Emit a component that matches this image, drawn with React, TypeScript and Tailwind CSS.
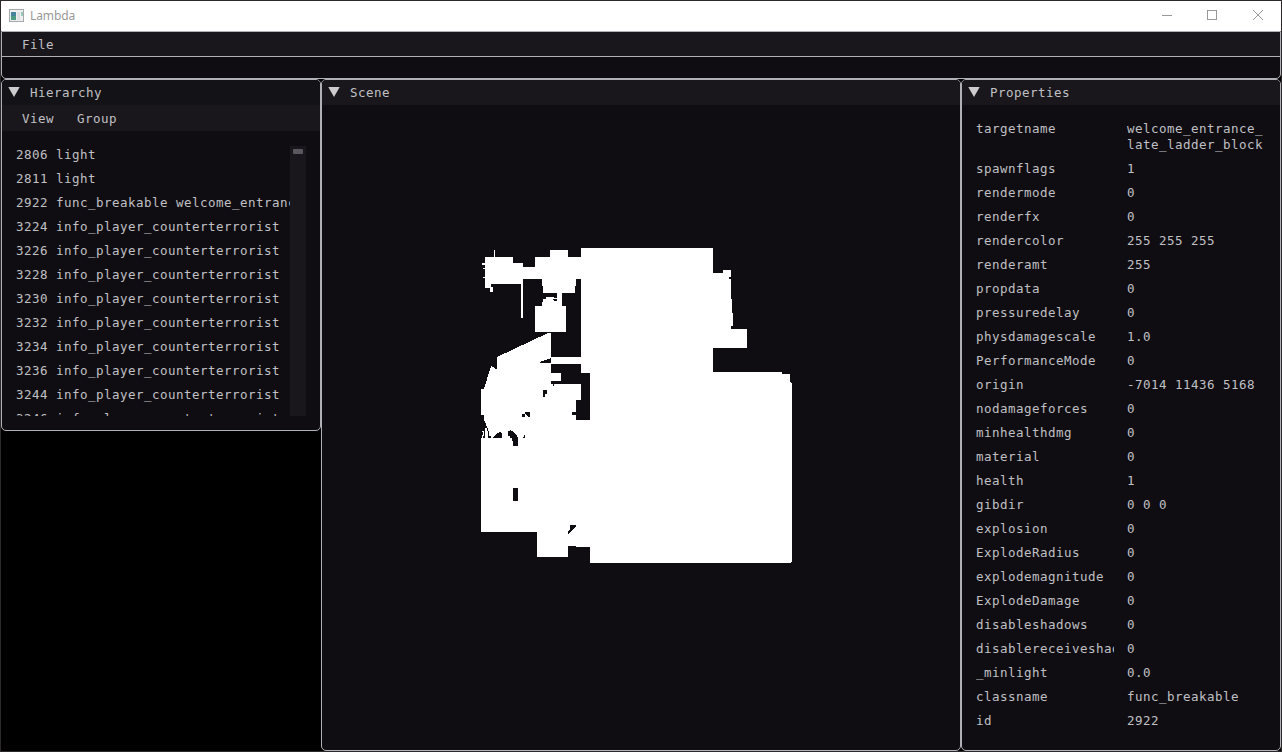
import type { ReactNode } from "react";

const entities = [
  "2806 light",
  "2811 light",
  "2922 func_breakable welcome_entrance_late_ladder_block",
  "3224 info_player_counterterrorist",
  "3226 info_player_counterterrorist",
  "3228 info_player_counterterrorist",
  "3230 info_player_counterterrorist",
  "3232 info_player_counterterrorist",
  "3234 info_player_counterterrorist",
  "3236 info_player_counterterrorist",
  "3244 info_player_counterterrorist",
  "3246 info_player_counterterrorist",
];

const properties: [string, string][] = [
  ["targetname", "welcome_entrance_\nlate_ladder_block"],
  ["spawnflags", "1"],
  ["rendermode", "0"],
  ["renderfx", "0"],
  ["rendercolor", "255 255 255"],
  ["renderamt", "255"],
  ["propdata", "0"],
  ["pressuredelay", "0"],
  ["physdamagescale", "1.0"],
  ["PerformanceMode", "0"],
  ["origin", "-7014 11436 5168"],
  ["nodamageforces", "0"],
  ["minhealthdmg", "0"],
  ["material", "0"],
  ["health", "1"],
  ["gibdir", "0 0 0"],
  ["explosion", "0"],
  ["ExplodeRadius", "0"],
  ["explodemagnitude", "0"],
  ["ExplodeDamage", "0"],
  ["disableshadows", "0"],
  ["disablereceiveshadows", "0"],
  ["_minlight", "0.0"],
  ["classname", "func_breakable"],
  ["id", "2922"],
];

function AppIcon() {
  return (
    <svg className="mb-px ml-2 h-[14px] w-4" viewBox="0 0 16 14" shapeRendering="crispEdges">
      <rect x="0.5" y="0.5" width="14" height="12" fill="#eef0f0" stroke="#a4a9ad" />
      <rect x="2" y="3" width="5" height="8" fill="#46839c" />
      <rect x="2" y="7" width="5" height="4" fill="#4c9b82" />
      <rect x="8" y="3" width="3" height="8" fill="#dedfe0" />
      <rect x="12" y="3" width="2" height="4" fill="#9cc8b8" />
    </svg>
  );
}

function TitleBar() {
  return (
    <header className="flex h-[30px] shrink-0 items-center bg-white">
      <AppIcon />
      <span className="ml-[5px] font-['Noto_Sans',sans-serif] text-[12px] leading-4 tracking-[-0.1px] text-[#999]">Lambda</span>
      <svg className="mb-[2px] ml-auto mr-4 h-[12px] w-[104px]" viewBox="0 0 104 12" fill="none" stroke="#999">
        <path d="M1 6.5h10M46.5 1.5h9v9h-9z" shapeRendering="crispEdges" />
        <path d="M92 1l10 10M102 1L92 11" />
      </svg>
    </header>
  );
}

function Panel({ title, active, className, children }: { title: string; active?: boolean; className: string; children: ReactNode }) {
  return (
    <section className={`flex flex-col overflow-hidden rounded-[5px] border border-[#b0b1b7] bg-[#0f0d12] ${className}`}>
      <div className={`flex h-[25px] shrink-0 items-center pl-1.5 ${active ? "bg-[#121217]" : "bg-[#1a171c]"}`}>
        <svg className="mb-px h-[10px] w-[12px]" viewBox="0 0 12 10">
          <path d="M0.3 0h11.4L6 10z" fill="#cccccf" />
        </svg>
        <h2 className="ml-2.5 pt-px">{title}</h2>
      </div>
      {children}
    </section>
  );
}

function MapView() {
  return (
    <svg className="ml-[148px] mt-[135px] h-[340px] w-[340px]" viewBox="470 240 340 340" shapeRendering="crispEdges">
      <path
        fill="#fff"
        d="M581 248H713V273H723V270H731V299H732V313H733V326H731V329H747V348H713V372H782V374H790V382H791V383H792V562H791V563H590V547H576V546H568V557H537V532H481V389H484L491 366L495 368V369H497V357L548 333H551V357H581V279H576V286H575V293H562V306H566V332H535V306H542V302H543V299H546V297H554V298H557V293H543V286H542V279H523V318H521V284H491V287H493V292H490V288H485V257H494V250H495V257H513V263H523V267H535V257H550V250H568V257H581Z"
      />
      <path fill="#fff" d="M482 263h3v2h-3zM483 268h2v1h-2zM483 277h2v1h-2zM557 293h5v14h-5z" />
      <path
        fill="#0f0d12"
        d="M551 364H581V373H590V420H576V400H581V384H554V386H553V384H551V381H561V373H551ZM540 362L551 358V363H540ZM729 277h2v2h-2zM731 277h3v2h-3zM553 299h4v2h-3v-1h-1zM543 390h4v4h-2v3h-2zM525 412h5v5h-2l-3-4zM522 414h3v3h-3zM572 412h4v3h-4zM513 488h5v13h-5zM570 525h6v2l-8 7v-3l2-2z"
      />
      <path
        fill="#0f0d12"
        d="M481 415h3v6h1v2h1v3h1v2h1v3h1v5h2v2h-3v-7h-1v-3h-2v2h-1v1h-2v7h-1zM482 432h1v3h-1zM483 436h2v2h-2zM484 430h1v8h-1zM493 438v-1l5-4h1v-1h2v1h1v5zM508 431h2v-1h1v1h2v1h1v1h1v1h1v1h1v2h1v9h-5v-5h-1v-3h-2v-2h-2zM524 435h1v3h-2v-1h1z"
      />
    </svg>
  );
}

export default function App() {
  return (
    <div className="flex h-[752px] w-[1282px] flex-col overflow-hidden border border-[#2d292b] bg-black font-['DejaVu_Sans_Mono',monospace] text-[12.5px] leading-4 tracking-[0.475px] text-[#c0c0c4]">
      <TitleBar />
      <div className="h-12 shrink-0 overflow-hidden rounded-b-[5px] border border-[#b0b1b7] bg-[#0f0d12]">
        <nav className="flex h-[25px] items-center border-b border-[#b0b1b7] bg-[#1a171c] pl-[20px] pt-[2px]">File</nav>
      </div>
      <main className="flex h-[672px] shrink-0 items-start">
        <Panel title="Hierarchy" active className="h-[352px] w-[320px]">
          <nav className="flex h-[26px] shrink-0 items-center gap-[23px] bg-[#1a171c] pl-[20px] pt-[2px]">
            <span>View</span>
            <span>Group</span>
          </nav>
          <div className="ml-[13px] mt-[15px] flex h-[270px] w-[291px] overflow-hidden">
            <ul className="w-[275px] overflow-hidden pl-px pt-px">
              {entities.map((name) => (
                <li key={name} className="mb-2 whitespace-pre">{name}</li>
              ))}
            </ul>
            <div className="w-4 bg-[#1a171c] px-[3px] pt-[3px]">
              <div className="h-[5px] rounded-[1px] bg-[#5a585e]" />
            </div>
          </div>
        </Panel>
        <Panel title="Scene" className="h-full w-[640px]">
          <MapView />
        </Panel>
        <Panel title="Properties" className="h-full w-[320px]">
          <dl className="pl-[14px] pt-4">
            {properties.map(([key, value]) => (
              <div key={key} className="mb-2 flex">
                <dt className="w-[138px] overflow-hidden whitespace-pre">{key}</dt>
                <dd className="ml-[13px] whitespace-pre">{value}</dd>
              </div>
            ))}
          </dl>
        </Panel>
      </main>
    </div>
  );
}
